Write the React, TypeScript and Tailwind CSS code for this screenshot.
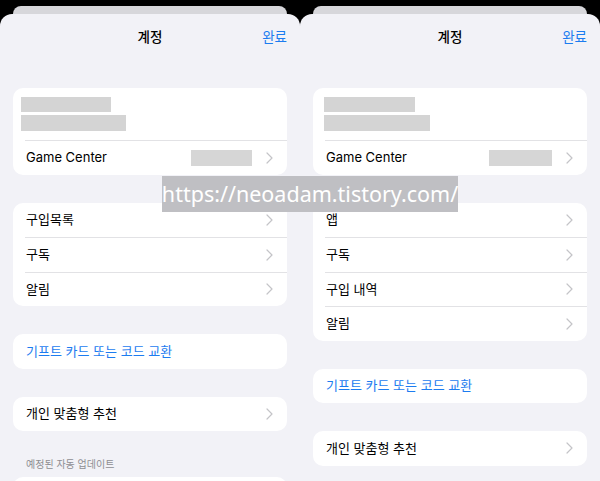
import React from 'react';

type PanelProps = {
  barLeft: number;
  bars: [number, number];
  gcBox: number;
  rows: string[];
  showUpdates?: boolean;
};

function Chevron() {
  return (
    <svg width="7" height="12" viewBox="0 0 7 12" fill="none" className="shrink-0">
      <path d="M1 1l5 5-5 5" stroke="#c4c4c8" strokeWidth="1.2" strokeLinecap="round" strokeLinejoin="round" />
    </svg>
  );
}

function ListRow({ label, first, chevron = true, blue = false, children }: {
  label: string;
  first?: boolean;
  chevron?: boolean;
  blue?: boolean;
  children?: React.ReactNode;
}) {
  return (
    <div className="flex h-[34.5px] pl-[12px]">
      <div
        className={`flex flex-1 items-center pr-[14px] pl-[1px] ${first ? '' : 'border-t border-[#e2e2e5]'}`}
      >
        <span className={`flex-1 text-[13px] ${blue ? 'text-[#1c7cf0]' : 'text-black'}`}>{label}</span>
        {children}
        {chevron && <Chevron />}
      </div>
    </div>
  );
}

function Panel({ barLeft, bars, gcBox, rows, showUpdates }: PanelProps) {
  return (
    <div className="flex h-full w-[300px] shrink-0 flex-col">
      <div className="mx-[13px] mt-[6px] h-[8px] shrink-0 rounded-t-[10px] bg-[#d7d7db]" />
      <div className="flex min-h-0 flex-1 flex-col overflow-hidden rounded-t-[12px] bg-[#f2f2f7] px-[13px]">
        <div className="relative flex h-[46px] shrink-0 items-center justify-center">
          <span className="text-[13.5px] font-medium text-black">계정</span>
          <span className="absolute right-0 text-[13.5px] text-[#1c7cf0]">완료</span>
        </div>

        <div className="mt-[28px] shrink-0 overflow-hidden rounded-[10px] bg-white">
          <div className="flex h-[52px] flex-col justify-center gap-[3px]" style={{ paddingLeft: barLeft }}>
            <div className="h-[15px] bg-[#d4d4d4]" style={{ width: bars[0] }} />
            <div className="h-[16px] bg-[#d4d4d4]" style={{ width: bars[1] }} />
          </div>
          <ListRow label="Game Center">
            <div className="mr-[14px] h-[16px] bg-[#d6d6d6]" style={{ width: gcBox }} />
          </ListRow>
        </div>

        <div className="mt-[28px] shrink-0 overflow-hidden rounded-[10px] bg-white">
          {rows.map((r, i) => (
            <ListRow key={r} label={r} first={i === 0} />
          ))}
        </div>

        <div className="mt-[28px] shrink-0 overflow-hidden rounded-[10px] bg-white">
          <ListRow label="기프트 카드 또는 코드 교환" first chevron={false} blue />
        </div>

        <div className="mt-[28px] shrink-0 overflow-hidden rounded-[10px] bg-white">
          <ListRow label="개인 맞춤형 추천" first />
        </div>

        {showUpdates && (
          <>
            <div className="mt-[26px] shrink-0 pl-[13px] text-[10px] text-[#8e8e93]">예정된 자동 업데이트</div>
            <div className="mt-[5px] h-[30px] shrink-0 rounded-t-[10px] bg-white" />
          </>
        )}
      </div>
    </div>
  );
}

export default function App() {
  return (
    <div
      className="relative flex h-[481px] w-[600px] overflow-hidden bg-black"
      style={{ fontFamily: '"Inter", "Noto Sans CJK KR", sans-serif' }}
    >
      <Panel barLeft={8} bars={[90, 105]} gcBox={61} rows={['구입목록', '구독', '알림']} showUpdates />
      <Panel barLeft={11} bars={[91, 106]} gcBox={63} rows={['앱', '구독', '구입 내역', '알림']} />

      <div
        className="absolute left-[162px] top-[176px] flex h-[36px] w-[296px] items-center justify-center bg-[#bfbfc3] text-[21.5px] leading-none text-white"
        style={{ fontFamily: '"Noto Sans", sans-serif' }}
      >
        https://neoadam.tistory.com/
      </div>
    </div>
  );
}
